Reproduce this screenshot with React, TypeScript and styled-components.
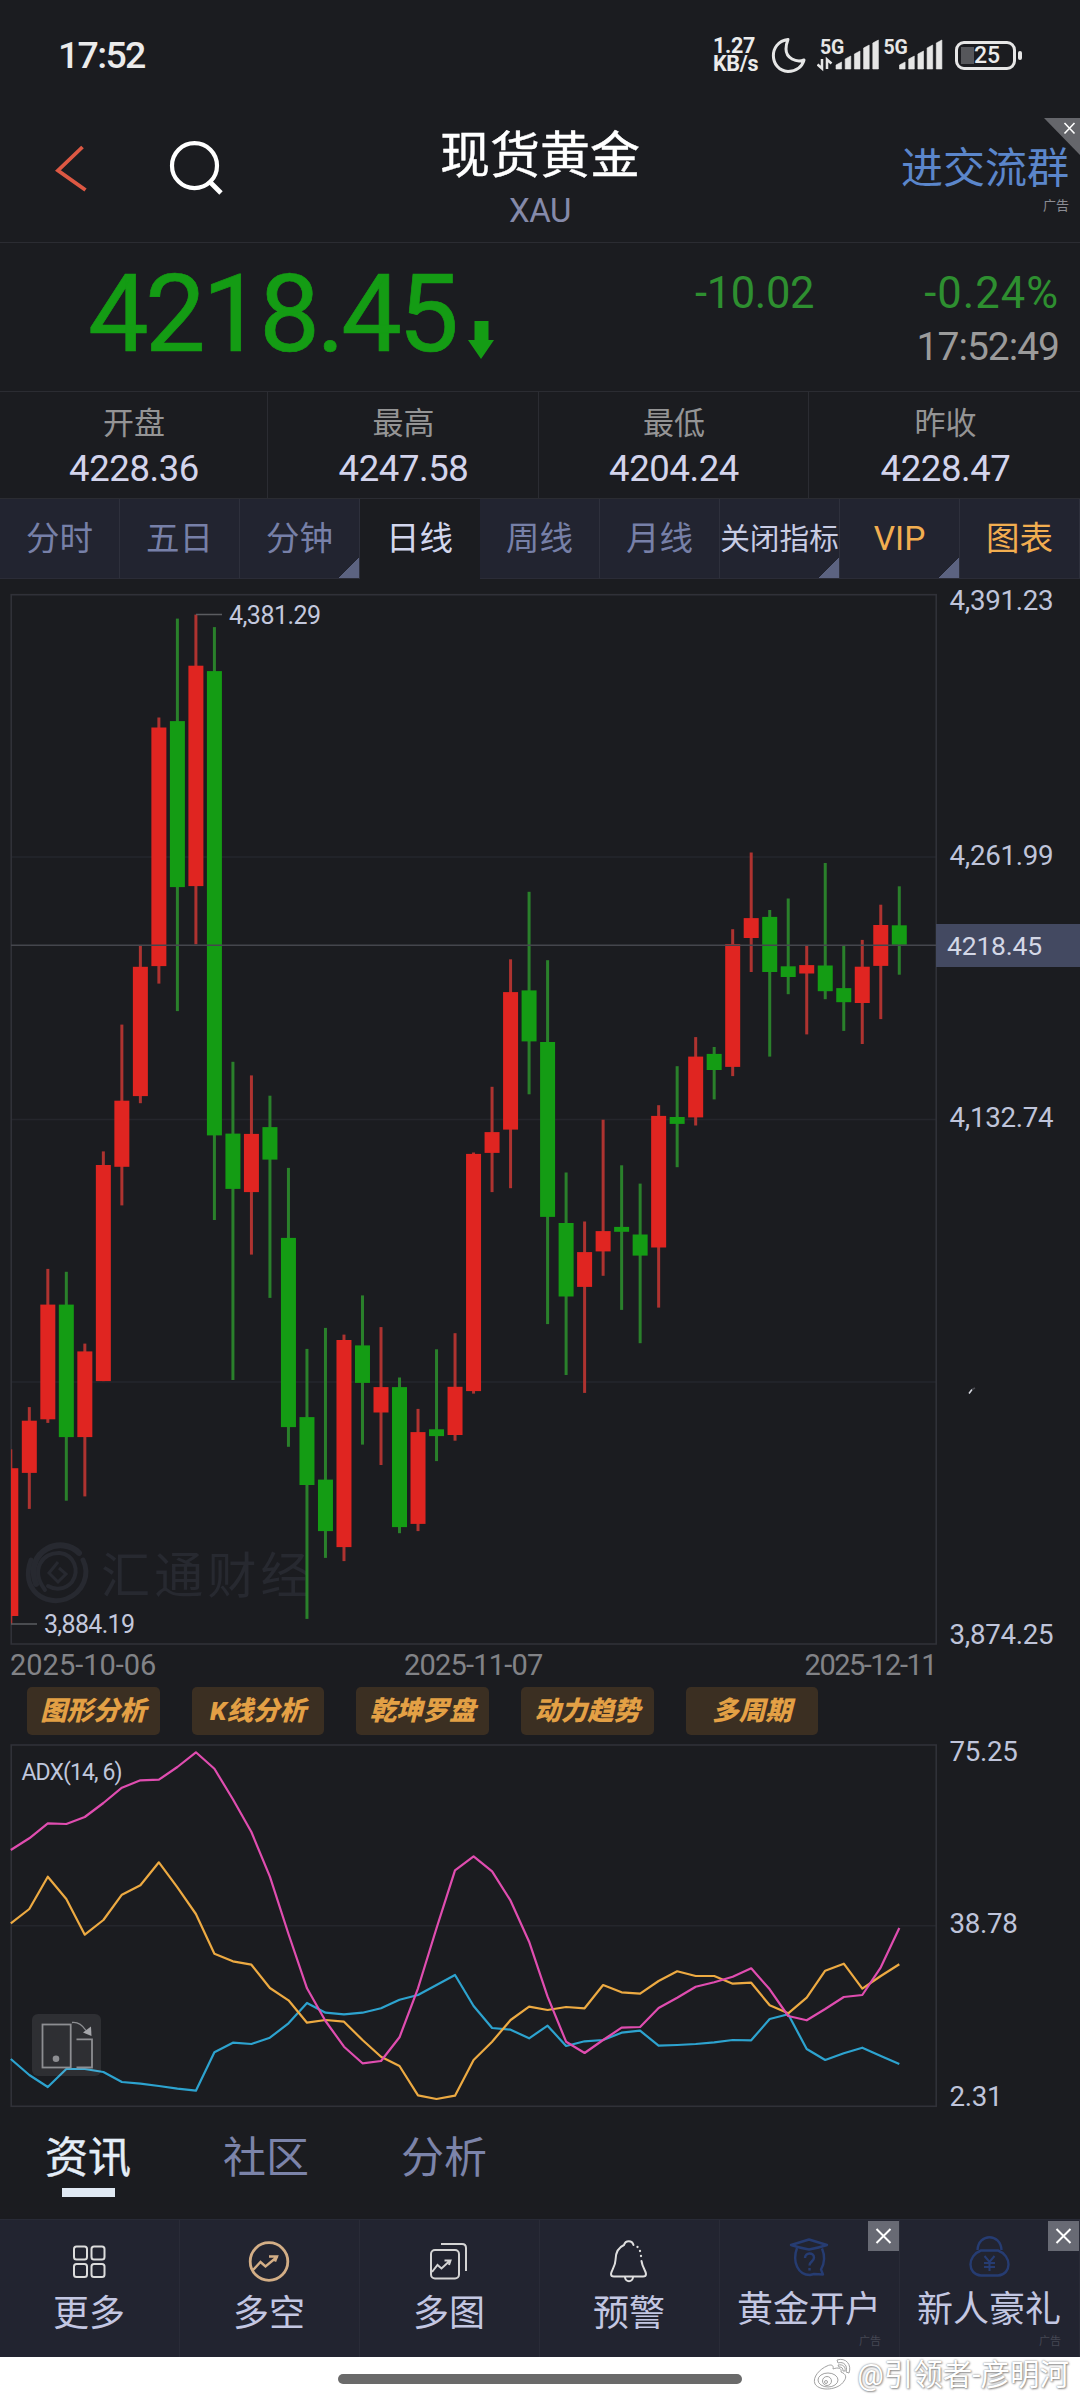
import React from "react";
import styled, { createGlobalStyle } from "styled-components";

const GlobalStyle = createGlobalStyle`
  *, *::before, *::after { box-sizing: border-box; }
  body {
    margin: 0;
    background: #1b1c20;
    font-family: Roboto, "Noto Sans CJK SC", sans-serif;
  }
`;

const LINE = "#2b2c32";
const UP = "#e02521";
const DOWN = "#149c14";

const Screen = styled.main`
  width: 1080px;
  height: 2400px;
  overflow: hidden;
  display: flex;
  flex-direction: column;
  background: #1b1c20;
`;

/* ---------- status bar ---------- */

const StatusBar = styled.header`
  height: 118px;
  padding: 35px 64px 43px 58px;
  display: flex;
  align-items: center;
  justify-content: space-between;
  color: #ebebeb;
`;

const Clock = styled.span`
  font-size: 37.5px;
  line-height: 40px;
  font-weight: 500;
  letter-spacing: -1.7px;
`;

const StatusIcons = styled.div`
  display: flex;
  align-items: center;
  height: 40px;
`;

const NetSpeed = styled.div`
  width: 58px;
  display: flex;
  flex-direction: column;
  font-size: 21.5px;
  line-height: 18px;
  font-weight: 700;
  letter-spacing: -0.3px;
`;

const Moon = styled.svg`
  width: 36px;
  height: 38px;
  margin-right: 10px;
`;

const Signals = styled.svg`
  width: 138px;
  height: 40px;
`;

const Battery = styled.div`
  position: relative;
  width: 61px;
  height: 29px;
  border: 3px solid #e6e6e6;
  border-radius: 9px;
  padding-left: 3px;
  display: flex;
  align-items: center;
  background: linear-gradient(#56575b, #56575b) 3px 3px / 13px 17px no-repeat;
  font-size: 23px;
  line-height: 23px;
  font-weight: 500;
  justify-content: center;

  &::after {
    content: "";
    position: absolute;
    right: -9px;
    top: 7px;
    width: 4px;
    height: 9px;
    border-radius: 2px;
    background: #e6e6e6;
  }
`;

/* ---------- title bar ---------- */

const TitleBar = styled.div`
  position: relative;
  height: 125px;
  border-bottom: 1px solid ${LINE};
  display: grid;
  grid-template-columns: 1fr 240px 1fr;
`;

const NavIcons = styled.svg`
  width: 240px;
  height: 110px;
`;

const TitleText = styled.div`
  text-align: center;
`;

const Title = styled.h1`
  margin: 10px 0 0;
  font-size: 50px;
  line-height: 56px;
  font-weight: 400;
  -webkit-text-stroke: 0.4px #ffffff;
  color: #ffffff;
`;

const Symbol = styled.div`
  margin-top: 8px;
  font-size: 33px;
  line-height: 38px;
  letter-spacing: -0.5px;
  color: #858aaa;
`;

const GroupLink = styled.a`
  padding: 25px 11px 0 0;
  text-align: right;
  font-size: 42px;
  line-height: 52px;
  color: #5b86cb;
  white-space: nowrap;
`;

const AdNote = styled.div`
  font-size: 13px;
  line-height: 16px;
  margin-top: 3px;
  color: #8b8c93;
`;

const AdCorner = styled.svg`
  position: absolute;
  top: 0;
  right: 0;
  width: 36px;
  height: 37px;
`;

/* ---------- quote ---------- */

const Quote = styled.section`
  height: 149px;
  border-bottom: 1px solid ${LINE};
  display: flex;
  padding-right: 21px;
`;

const LastPrice = styled.div`
  width: 378px;
  margin-left: 88px;
  padding-top: 6px;
  font-size: 108px;
  line-height: 130px;
  letter-spacing: -3.6px;
  white-space: nowrap;
  color: ${DOWN};
  -webkit-text-stroke: 0.7px ${DOWN};
`;

const DownArrow = styled.svg`
  width: 26px;
  height: 38px;
  margin: 78px 0 0 2px;
`;

const Changes = styled.div`
  flex: 1;
  padding-top: 28px;
  display: grid;
  grid-template-columns: 320px 1fr;
  grid-template-rows: 46px 60px;
  text-align: right;
`;

const Change = styled.span<{ $spacing: number }>`
  font-size: 43.5px;
  line-height: 46px;
  letter-spacing: ${(p) => p.$spacing}px;
  color: #2e8f30;
  white-space: nowrap;
`;

const QuoteTime = styled.span`
  grid-column: 2;
  font-size: 39px;
  line-height: 60px;
  letter-spacing: -1px;
  color: #9b9b9b;
`;

const Stats = styled.section`
  height: 107px;
  display: grid;
  grid-template-columns: 268px 271px 270px 271px;
  border-bottom: 1px solid ${LINE};
`;

const Stat = styled.div`
  text-align: center;
  border-right: 1px solid ${LINE};
  padding-top: 12px;
  padding-left: 1px;

  &:last-child { border-right: 0; padding-left: 2px; }
`;

const StatLabel = styled.div`
  font-size: 31px;
  line-height: 40px;
  color: #949495;
`;

const StatValue = styled.div`
  font-size: 36.5px;
  line-height: 44px;
  margin-top: 3px;
  letter-spacing: -0.4px;
  color: #d3d4ec;
`;

/* ---------- period tabs ---------- */

const Periods = styled.nav`
  height: 80px;
  display: grid;
  grid-template-columns: repeat(9, 1fr);
`;

const periodColors = { normal: "#7780a8", active: "#d3d7ee", light: "#c8cce4", gold: "#f2ae50" };

const Period = styled.div<{ $tone: keyof typeof periodColors; $small?: boolean; $more?: boolean }>`
  display: flex;
  align-items: center;
  justify-content: center;
  line-height: 40px;
  padding-top: 1px;
  border-right: 1px solid #2e303c;
  border-bottom: 1px solid #2b2c37;
  background: ${(p) => (p.$tone === "active" ? "#1b1c20" : "#222430")};
  ${(p) =>
    p.$more &&
    "background: linear-gradient(135deg, transparent 50%, #5c6381 50%) right bottom / 20px 21px no-repeat #222430;"}
  ${(p) => p.$tone === "active" && "border-color: #1b1c20;"}
  color: ${(p) => periodColors[p.$tone]};
  font-size: ${(p) => (p.$small ? 29.7 : 33.5)}px;
  white-space: nowrap;
`;

/* ---------- charts ---------- */

const ChartRow = styled.section<{ $height: number }>`
  position: relative;
  height: ${(p) => p.$height}px;
  display: flex;
`;

const Plot = styled.svg<{ $height: number }>`
  width: 937px;
  height: ${(p) => p.$height}px;
  flex: none;
`;

const Axis = styled.div<{ $rows: string }>`
  flex: 1;
  padding-left: 12.5px;
  display: grid;
  grid-template-rows: ${(p) => p.$rows};
  align-items: end;
  font-size: 27.7px;
  line-height: 32px;
  letter-spacing: -0.3px;
  color: #bfc4da;
`;

const PriceTag = styled.div`
  position: absolute;
  left: 936px;
  top: 345px;
  width: 144px;
  height: 43px;
  padding-left: 11px;
  background: #434961;
  font-size: 26.5px;
  line-height: 43px;
  letter-spacing: -0.2px;
  color: #d3d7e6;
`;

const Dates = styled.div`
  height: 39px;
  padding-top: 1px;
  width: 926px;
  margin-left: 10px;
  display: grid;
  grid-template-columns: 394px 1fr auto;
  font-size: 29px;
  line-height: 36px;
  color: #828387;
`;

const DateLabel = styled.span<{ $tight: number }>`
  letter-spacing: ${(p) => p.$tight}px;
`;

const Chips = styled.div`
  height: 58px;
  padding: 2px 0 0 27px;
  display: flex;
  gap: 32.2px;
`;

const Chip = styled.span`
  width: 132.5px;
  height: 48px;
  border-radius: 5px;
  background: #3b2f22;
  text-align: center;
  font-size: 26.5px;
  line-height: 48px;
  font-weight: 900;
  font-style: italic;
  color: #e3a045;
`;

const RotateButton = styled.svg`
  position: absolute;
  left: 32px;
  top: 271px;
  width: 69px;
  height: 62px;
`;

/* ---------- lower tabs ---------- */

const Sections = styled.nav`
  height: 110px;
  padding: 20px 0 0 45px;
  display: flex;
  gap: 91px;
`;

const SectionTab = styled.div<{ $active?: boolean }>`
  width: 87px;
  font-size: 43px;
  line-height: 58px;
  color: ${(p) => (p.$active ? "#e4edf7" : "#7c84aa")};
  ${(p) => p.$active && "-webkit-text-stroke: 0.4px #e4edf7;"}

  &::after {
    content: "";
    display: ${(p) => (p.$active ? "block" : "none")};
    width: 53px;
    height: 9px;
    margin: 1px auto 0;
    background: #e0e9f3;
  }
`;

const ActionBar = styled.nav`
  height: 138px;
  display: grid;
  grid-template-columns: repeat(6, 1fr);
  background: #222430;
`;

const Action = styled.div`
  position: relative;
  border-right: 1px solid #292b37;
  border-top: 1px solid #292b37;
  padding-right: 1px;
  display: flex;
  flex-direction: column;
  align-items: center;
`;

const ActionIcon = styled.svg`
  width: 52px;
  height: 52px;
  margin-top: 15px;
`;

const ActionLabel = styled.span<{ $ad?: boolean }>`
  margin-top: ${(p) => (p.$ad ? 0 : 4)}px;
  font-size: 36px;
  line-height: 46px;
  color: #c3c7e2;
  white-space: nowrap;
`;

const ActionAd = styled.span`
  position: absolute;
  right: 18px;
  bottom: 8px;
  font-size: 11px;
  line-height: 14px;
  color: #454753;
`;

const CloseBox = styled.svg`
  position: absolute;
  right: 0;
  top: 1px;
  width: 31px;
  height: 30px;
  background: #686a74;
`;

const HomeArea = styled.footer`
  position: relative;
  height: 43px;
  background: #ffffff;
  display: flex;
  justify-content: center;
  align-items: flex-start;
`;

const HomeIndicator = styled.div`
  width: 404px;
  height: 10px;
  margin-top: 17px;
  border-radius: 5px;
  background: #6a6a6a;
`;

const Credit = styled.div`
  position: absolute;
  right: 11px;
  top: 0;
  display: flex;
  align-items: center;
  gap: 4px;
  font-size: 29.5px;
  line-height: 36px;
  color: #ffffff;
  text-shadow: 0 0 2px #777, 1px 1px 2px #999;
  white-space: nowrap;
`;

const CreditLogo = styled.svg`
  width: 40px;
  height: 34px;
`;

/* ---------- data ---------- */

type Candle = [up: 0 | 1, high: number, bodyTop: number, bodyBottom: number, low: number];

const candles: Candle[] = [
  [1, 1449.3, 1468.2, 1616, 1624.3],
  [1, 1407.1, 1420.7, 1472.9, 1508.9],
  [1, 1268.9, 1304.6, 1419.3, 1422.9],
  [0, 1271.8, 1304.6, 1437.1, 1500.7],
  [1, 1343.6, 1351.4, 1437.1, 1496.4],
  [1, 1151.4, 1165, 1381.1, 1381.1],
  [1, 1024.6, 1100.7, 1166.8, 1205.4],
  [1, 945.4, 966.8, 1096.1, 1103.2],
  [1, 717.5, 727.5, 966.1, 983.6],
  [0, 618.6, 721.1, 887.1, 1011.1],
  [1, 614.6, 665.7, 886.1, 944.3],
  [0, 627.1, 671.1, 1135.4, 1220],
  [0, 1061.8, 1133.6, 1188.9, 1380],
  [1, 1075.4, 1133.9, 1192.1, 1254.6],
  [0, 1095.7, 1127.1, 1159.6, 1297.9],
  [0, 1167.9, 1237.9, 1427.1, 1446.8],
  [0, 1348.9, 1417.1, 1485, 1618.9],
  [0, 1327.9, 1479.6, 1531.1, 1557.9],
  [1, 1334.6, 1340, 1547.1, 1561.1],
  [0, 1295.4, 1345.4, 1382.9, 1444.6],
  [1, 1327.1, 1387.1, 1412.5, 1465],
  [0, 1377.5, 1387.1, 1527.1, 1533.2],
  [1, 1408.9, 1432.1, 1523.9, 1531.1],
  [0, 1349.3, 1429.3, 1436.1, 1461.1],
  [1, 1333.2, 1386.8, 1435, 1440.7],
  [1, 1152.5, 1153.9, 1391.1, 1393.6],
  [1, 1086.8, 1132.1, 1152.9, 1192.1],
  [1, 959.3, 992.1, 1129.6, 1188.2],
  [0, 891.8, 990.4, 1041.4, 1094.3],
  [0, 960.2, 1042, 1216.9, 1324.1],
  [0, 1172.5, 1223, 1296.5, 1375],
  [1, 1221.5, 1252.1, 1286.9, 1392.9],
  [1, 1119.7, 1231.1, 1251.4, 1275.8],
  [0, 1165.3, 1226.9, 1231.8, 1309.9],
  [0, 1183.6, 1234.5, 1255.6, 1343.2],
  [1, 1105.2, 1115.9, 1247.5, 1307.6],
  [0, 1066.2, 1117, 1123.9, 1167.2],
  [1, 1037.1, 1056.6, 1117.4, 1125.5],
  [0, 1047, 1053.9, 1070, 1099.4],
  [1, 929.2, 944.1, 1066.9, 1076.1],
  [1, 852.5, 918.1, 938, 972],
  [0, 910, 916.9, 972, 1056.6],
  [0, 898.5, 966.3, 977, 994.2],
  [1, 945.2, 965.1, 973.5, 1034.4],
  [0, 863, 965.5, 991.2, 999.2],
  [0, 945.2, 988.1, 1002.2, 1030.9],
  [1, 939.9, 966.7, 1003, 1044],
  [1, 904.7, 925, 965.9, 1019.1],
  [0, 886.3, 925.3, 944.8, 974.7],
];

const adxPink = [
  1850, 1838.3, 1823.3, 1824, 1817, 1803, 1787.7, 1780.3, 1779.7, 1767, 1752.3, 1768.7, 1799.3, 1832, 1876.7, 1934,
  1988.3, 2021, 2046.7, 2063.3, 2061, 2037.3, 1988.3, 1928.3, 1870.3, 1856.3, 1871.3, 1900.7, 1941.7, 1996.7, 2041.7,
  2053, 2040, 2027.7, 2027, 2008, 1997.7, 1986.7, 1982.3, 1976.7, 1968.3, 1989.3, 2016, 2020.3, 2009, 1997, 1995,
  1967.3, 1928,
];
const adxGold = [
  1923.3, 1909, 1876.7, 1899, 1934.7, 1920, 1894.7, 1885.3, 1862.3, 1887.3, 1914, 1953.7, 1961.3, 1964.7, 1988, 2000.3,
  2022.7, 2020, 2021.7, 2040, 2056.7, 2066, 2095.3, 2099, 2095.7, 2060, 2041.7, 2020, 2006.7, 2010, 2007, 2008.3, 1985,
  1992.3, 1993.7, 1981, 1971.3, 1976, 1976, 1983.7, 1982.7, 2005.3, 2013.3, 1997.7, 1970.7, 1963.7, 1988.7, 1976,
  1964.3,
];
const adxBlue = [
  2059, 2075, 2087, 2069, 2069, 2072, 2082, 2083.7, 2086, 2088.7, 2090.7, 2052.3, 2042.7, 2044, 2037.7, 2023.3, 2003,
  2012.7, 2014.3, 2012.7, 2008.3, 1999.7, 1995, 1985, 1975, 2006, 2028, 2029.7, 2038.3, 2025.7, 2046, 2041.3, 2040,
  2032.7, 2030.7, 2045.7, 2045, 2044, 2042.3, 2040, 2040.3, 2019, 2014.3, 2049, 2060, 2053.3, 2047.7, 2056, 2064,
];

const slotX = (i: number) => 10.8 + 18.51 * i;
const polyline = (ys: number[]) => ys.map((y, i) => `${slotX(i).toFixed(1)},${y}`).join(" ");

/* ---------- drawings ---------- */

const Bars = ({ x }: { x: number }) => (
  <g fill="#e6e6e6">
    {[6, 12, 17, 23, 28].map((h, i) => (
      <path key={h} d={`M${x + i * 9.2} ${34 - h + 2}l5.6 -3V34h-5.6z`} stroke="#e6e6e6" strokeWidth="0.6" strokeLinejoin="round" />
    ))}
  </g>
);

const SignalIcons = () => (
  <Signals viewBox="817 35 138 40">
    <g transform="translate(0 35)">
      <text x="820" y="18.5" fontSize="19.5" fontWeight="700" fill="#e6e6e6" letterSpacing="-0.2">5G</text>
      <text x="883.5" y="18.5" fontSize="19.5" fontWeight="700" fill="#e6e6e6" letterSpacing="-0.2">5G</text>
      <path d="M822 24v9.5l-4.5 -4M827 34v-9.5l4.5 4" fill="none" stroke="#e6e6e6" strokeWidth="2.5" />
      <Bars x={836} />
      <Bars x={899.5} />
    </g>
  </Signals>
);

const CandleChart = () => (
  <Plot $height={1067} viewBox="0 579 937 1067">
    <defs>
      <clipPath id="plot"><rect x="11" y="595" width="925" height="1049" /></clipPath>
    </defs>
    <path d="M11 857H936M11 1119.5H936M11 1382H936" stroke="#25262c" strokeWidth="1.5" />
    <rect x="11.2" y="594.7" width="925" height="1049.3" fill="none" stroke="#303138" strokeWidth="1.6" />
    <g fill="none" stroke="#272930" strokeLinecap="round">
      <path d="M31 1560C20 1590 45 1606 66 1599C84 1592 90 1574 83 1560" strokeWidth="5" />
      <path d="M36 1584C24 1550 62 1535 79 1553" strokeWidth="6" />
      <path d="M45 1590C30 1570 42 1552 60 1553C74 1555 80 1570 72 1582C65 1590 55 1590 48 1586" strokeWidth="4" />
      <path d="M58 1562L49 1573L58 1582L66 1574L59 1568" strokeWidth="3" strokeLinecap="butt" />
    </g>
    <text x="101" y="1593" fontSize="49" letterSpacing="4.2" fill="#272930">汇通财经</text>
    <g clipPath="url(#plot)">
      {candles.map(([up, high, top, bottom, low], i) => (
        <g key={i}>
          <rect x={slotX(i) - 1.5} y={high} width="3" height={low - high} fill={up ? "#ae3330" : "#2a802b"} />
          <rect x={slotX(i) - 7.5} y={top} width="15" height={bottom - top} fill={up ? UP : DOWN} />
        </g>
      ))}
    </g>
    <path d="M11 945.3H936" stroke="#45464d" strokeWidth="1.6" />
    <path d="M196 614.5H222M11 1624H37" stroke="#5b5c60" strokeWidth="1.5" />
    <text x="229" y="624" fontSize="25" fill="#c3c8dd" textLength="92">4,381.29</text>
    <text x="44" y="1633" fontSize="25" fill="#c3c8dd" textLength="91">3,884.19</text>
  </Plot>
);

const AdxChart = () => (
  <Plot $height={365} viewBox="0 1743 937 365">
    <path d="M11 1925.7H936" stroke="#25262c" strokeWidth="1.5" />
    <rect x="11.2" y="1745" width="925" height="361.3" fill="none" stroke="#303138" strokeWidth="1.6" />
    <text x="21.5" y="1779.5" fontSize="23" fill="#bfc6dc" textLength="101">ADX(14, 6)</text>
    <g fill="none" strokeWidth="2.2" strokeLinejoin="round">
      <polyline points={polyline(adxBlue)} stroke="#2da3cf" />
      <polyline points={polyline(adxGold)} stroke="#edaa42" />
      <polyline points={polyline(adxPink)} stroke="#e04db0" />
    </g>
  </Plot>
);

const Close = () => (
  <CloseBox viewBox="0 0 31 30">
    <path d="M8.5 8l14 14M22.5 8l-14 14" stroke="#fff" strokeWidth="2" />
  </CloseBox>
);

const actions = [
  {
    label: "更多",
    icon: (
      <g fill="none" stroke="#dcdcdc" strokeWidth="2">
        {[[10.5, 11], [28, 11], [10.5, 28.5], [28, 28.5]].map(([x, y]) => (
          <rect key={`${x}-${y}`} x={x + 0.5} y={y + 0.5} width="13" height="13" rx="2.5" />
        ))}
      </g>
    ),
  },
  {
    label: "多空",
    icon: (
      <g fill="none" stroke="#d3ae86" strokeWidth="2.8">
        <circle cx="26" cy="26.5" r="18.8" />
        <path d="M10 35l7.5 -8 5 4.500 12 -10M26 21.500h8l-2 5" strokeWidth="2.4" />
      </g>
    ),
  },
  {
    label: "多图",
    icon: (
      <g fill="none" stroke="#d4d4d4" strokeWidth="2">
        <rect x="8" y="15" width="28" height="28.500" rx="4" />
        <path d="M18 9H39q4 0 4 4V36M9 37l5.500 -7 4 3.500 8 -7.500M21.500 25.500h6l-1.500 4.500" />
      </g>
    ),
  },
  {
    label: "预警",
    icon: (
      <g fill="none" stroke="#dedede" strokeWidth="2" strokeLinecap="round">
        <path d="M30.500 10c-1.500 -5 -8 -5 -9.500 0c-7 3 -8.500 9 -8.500 15c0 6 -4 10 -4.500 14q0 2.500 3 2.500H40q3 0 3 -2.500c-.5 -4 -3.500 -6 -4.500 -13" />
        <path d="M22 42c0 5.500 8 5.500 8 0" />
        <path d="M34.500 12v.1M37 16v.1M38 21v.1" strokeWidth="2.3" />
      </g>
    ),
  },
  {
    label: "黄金开户",
    ad: true,
    icon: (
      <g fill="none" stroke="#263c72" strokeWidth="2.4" strokeLinejoin="round">
        <path d="M8 10Q18 7 26 4.500Q34 7 44 10Q35 13 26 14.500Q17 13 8 10z" />
        <path d="M14 13c-5 14 1 27 13 27l4 -1 9 .5 -2 -5c4 -7 4 -14 1 -21" />
        <path d="M22 23c0 -6 9 -6 9 -.5c0 4 -4.500 4 -4.500 8M26.500 33v2.500" />
      </g>
    ),
  },
  {
    label: "新人豪礼",
    ad: true,
    icon: (
      <g fill="none" stroke="#263c72" strokeWidth="2.400">
        <path d="M14.500 15c1 -17 23 -17 24 0" />
        <path d="M18 15.500H35c14 5 14 24 0 25H18c-14 -1 -14 -20 0 -25z" />
        <path d="M21.500 21l5 6 5 -6M26.500 27v9M21 28h11M21 32h11" strokeWidth="2" />
      </g>
    ),
  },
];

const stats = [
  ["开盘", "4228.36"],
  ["最高", "4247.58"],
  ["最低", "4204.24"],
  ["昨收", "4228.47"],
];

export default function App() {
  return (
    <Screen>
      <GlobalStyle />
      <StatusBar>
        <Clock>17:52</Clock>
        <StatusIcons>
          <NetSpeed>
            <span>1.27</span>
            <span>KB/s</span>
          </NetSpeed>
          <Moon viewBox="0 0 36 38">
            <path d="M17 3.500C-3 6 -2 34 17 35.500C25 35.500 31 31 33 24C25 27 15 22 15 13C15 9 16 6 17 3.500z" fill="none" stroke="#e6e6e6" strokeWidth="3" strokeLinejoin="round" />
          </Moon>
          <SignalIcons />
          <Battery>25</Battery>
        </StatusIcons>
      </StatusBar>

      <TitleBar>
        <NavIcons viewBox="0 118 240 110">
          <path d="M82.500 147L58 170.500L85.500 190" fill="none" stroke="#dd5843" strokeWidth="3.800" />
          <circle cx="194.500" cy="165.700" r="22.500" fill="none" stroke="#fff" strokeWidth="4.200" />
          <path d="M210 182L221 193" stroke="#fff" strokeWidth="4.800" />
        </NavIcons>
        <TitleText>
          <Title>现货黄金</Title>
          <Symbol>XAU</Symbol>
        </TitleText>
        <GroupLink>
          进交流群
          <AdNote>广告</AdNote>
        </GroupLink>
        <AdCorner viewBox="0 0 36 37">
          <path d="M0 0H36V37z" fill="#65666b" />
          <path d="M20.500 5l10 10.500M30.500 5l-10 10.500" stroke="#fff" strokeWidth="1.600" />
        </AdCorner>
      </TitleBar>

      <Quote>
        <LastPrice>4218.45</LastPrice>
        <DownArrow viewBox="0 0 26 38">
          <path d="M6.500 0H20.500V19H26L13 38L0 19H6.500z" fill={DOWN} />
        </DownArrow>
        <Changes>
          <Change $spacing={-0.4}>-10.02</Change>
          <Change $spacing={1}>-0.24%</Change>
          <QuoteTime>17:52:49</QuoteTime>
        </Changes>
      </Quote>

      <Stats>
        {stats.map(([label, value]) => (
          <Stat key={label}>
            <StatLabel>{label}</StatLabel>
            <StatValue>{value}</StatValue>
          </Stat>
        ))}
      </Stats>

      <Periods>
        <Period $tone="normal">分时</Period>
        <Period $tone="normal">五日</Period>
        <Period $tone="normal" $more>分钟</Period>
        <Period $tone="active">日线</Period>
        <Period $tone="normal">周线</Period>
        <Period $tone="normal">月线</Period>
        <Period $tone="light" $small $more>关闭指标</Period>
        <Period $tone="gold" $more>VIP</Period>
        <Period $tone="gold">图表</Period>
      </Periods>

      <ChartRow $height={1067}>
        <CandleChart />
        <Axis $rows="38px 255px 262px 266px 251px">
          <span>4,391.23</span>
          <span>4,261.99</span>
          <span>4,132.74</span>
          <svg width="40" height="20" viewBox="0 0 40 20">
            <path d="M19 13.500l3 -4" stroke="#d6d8df" strokeWidth="1.500" />
            <path d="M22 9.500l3 -1.500" stroke="#4a4b51" strokeWidth="1.500" />
          </svg>
          <span>3,874.25</span>
        </Axis>
        <PriceTag>4218.45</PriceTag>
      </ChartRow>

      <Dates>
        <DateLabel $tight={0}>2025-10-06</DateLabel>
        <DateLabel $tight={-0.8}>2025-11-07</DateLabel>
        <DateLabel $tight={-1.5}>2025-12-11</DateLabel>
      </Dates>

      <Chips>
        {["图形分析", "K线分析", "乾坤罗盘", "动力趋势", "多周期"].map((name) => (
          <Chip key={name}>{name}</Chip>
        ))}
      </Chips>

      <ChartRow $height={366}>
        <AdxChart />
        <Axis $rows="25px 172px 173px">
          <span>75.25</span>
          <span>38.78</span>
          <span>2.31</span>
        </Axis>
        <RotateButton viewBox="32 2014 69 62">
          <rect x="32" y="2014" width="69" height="62" rx="6" fill="#ffffff" fillOpacity="0.085" />
          <g fill="none" stroke="#8d8e92" strokeWidth="1.800">
            <rect x="42.500" y="2024.500" width="28.200" height="43" />
            <path d="M76.500 2039.300H92V2067.500H76.500" />
            <path d="M72 2022.500q8 -1 14 8" strokeWidth="1.300" />
          </g>
          <circle cx="56" cy="2058.700" r="3.300" fill="#8d8e92" />
          <path d="M91 2026.500L91.500 2036L83 2032.500z" fill="#a5a6aa" />
        </RotateButton>
      </ChartRow>

      <Sections>
        <SectionTab $active>资讯</SectionTab>
        <SectionTab>社区</SectionTab>
        <SectionTab>分析</SectionTab>
      </Sections>

      <ActionBar>
        {actions.map(({ label, icon, ad }) => (
          <Action key={label}>
            <ActionIcon viewBox="0 0 52 52">{icon}</ActionIcon>
            <ActionLabel $ad={ad}>{label}</ActionLabel>
            {ad && <ActionAd>广告</ActionAd>}
            {ad && <Close />}
          </Action>
        ))}
      </ActionBar>

      <HomeArea>
        <HomeIndicator />
        <Credit>
          <CreditLogo viewBox="0 0 40 34">
            <g fill="#fff" stroke="#a2a2a2" strokeWidth="1">
              <path d="M14 8c4 -2 7 -1 6 3c5 -2 9 -1 8 3c5 2 6 5 3 9c-5 9 -24 11 -29 3C-1 19 7 11 14 8z" />
              <ellipse cx="15" cy="22" rx="10" ry="7" />
              <circle cx="14" cy="23" r="4.500" />
              <circle cx="13" cy="24" r="1.500" />
              <path d="M24 2c9 -3 15 5 12 13l-3 -1c2 -6 -2 -11 -8 -9zM25 7c5 -1 8 2 7 6l-2 0c0 -3 -1 -4 -4 -4z" />
            </g>
          </CreditLogo>
          <span>@引领者-彦明河</span>
        </Credit>
      </HomeArea>
    </Screen>
  );
}
